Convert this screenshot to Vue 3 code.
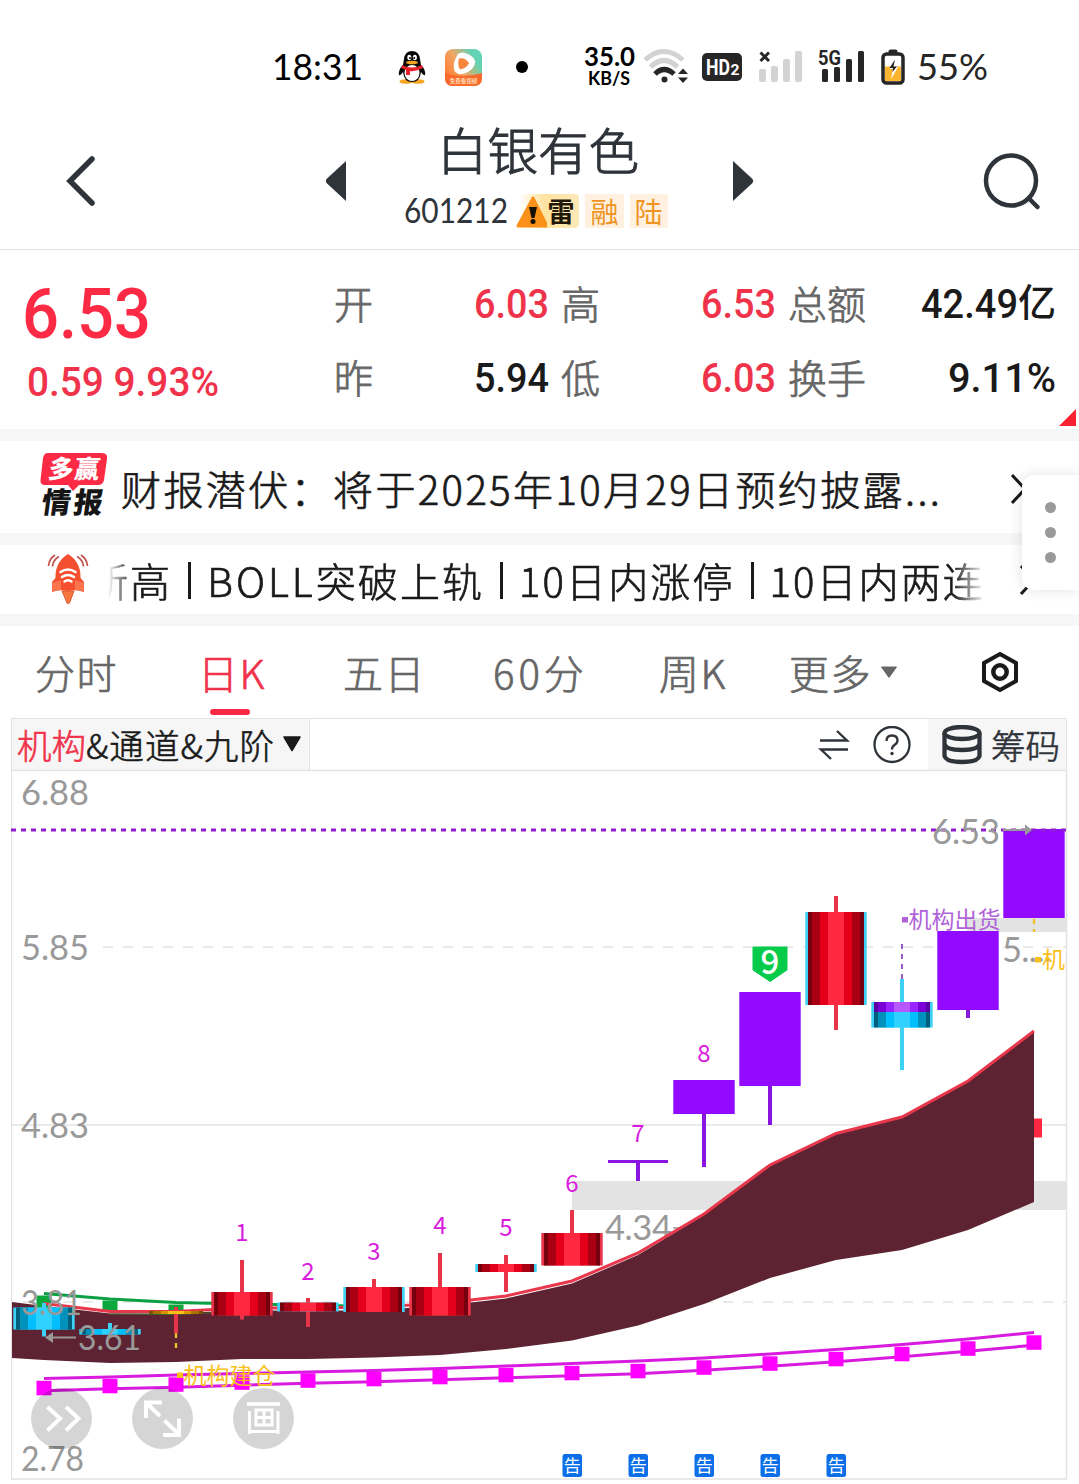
<template>
  <div class="page">
    <header class="status-bar">
      <FitText class="time" text="18:31" :w="91" :size="37" />
      <svg class="qq" width="28" height="34" viewBox="0 0 28 34">
        <ellipse cx="8" cy="31.5" rx="6.5" ry="2.3" fill="#f5a623" />
        <ellipse cx="20" cy="31.5" rx="6.5" ry="2.3" fill="#f5a623" />
        <path d="M5 15 Q0 20 1 25 Q3 26 5 22 Q6 32 14 32 Q22 32 23 22 Q25 26 27 25 Q28 20 23 15 L22 9 Q21 1 14 1 Q7 1 6 9Z" fill="#080808" />
        <ellipse cx="14" cy="23" rx="7.5" ry="8" fill="#fff" />
        <ellipse cx="11.3" cy="7.5" rx="2" ry="2.8" fill="#fff" />
        <ellipse cx="16.9" cy="7.5" rx="2" ry="2.8" fill="#fff" />
        <circle cx="12" cy="8" r="1" fill="#000" />
        <circle cx="16.2" cy="8" r="1" fill="#000" />
        <ellipse cx="14" cy="12.5" rx="6" ry="1.8" fill="#f5a623" />
        <path d="M4 15 Q14 20 24 15 L25 18 Q18 22 12 21 L12 25 H8 V20 Q5 19 3.500 18Z" fill="#e8202c" />
      </svg>
      <svg class="video-app" width="37" height="37" viewBox="0 0 37 37">
        <defs>
          <linearGradient id="appBg" x1="0" y1="0.7" x2="1" y2="0.1">
            <stop offset="0" stop-color="#ff7a2f" />
            <stop offset="0.4" stop-color="#f0a664" />
            <stop offset="0.8" stop-color="#62d3b4" />
          </linearGradient>
        </defs>
        <rect width="37" height="37" rx="8" fill="url(#appBg)" />
        <path d="M0 24 Q18 30 37 24 V29 Q37 37 29 37 H8 Q0 37 0 29Z" fill="#f9692b" />
        <path d="M13 5 Q17 2 23 5 Q31 9 30 14 Q29 20 21 24 Q13 27 9.500 22 Q7 14 13 5Z" fill="#fff" />
        <path d="M14 9.500 Q20 8 24 14 Q22 19 15 20.500 Q12 15 14 9.500Z" fill="#f9843b" />
        <text x="18.500" y="34" text-anchor="middle" font-size="5.500" font-weight="500" fill="#ffe9c8">免费看视频</text>
      </svg>
      <span class="dot"></span>
      <div class="speed">
        <FitText text="35.0" :w="51" :size="26" />
        <FitText text="KB/S" :w="42" :size="18" />
      </div>
      <svg class="wifi" width="44" height="36" viewBox="0 0 44 36" fill="none">
        <path d="M1 11 Q20 -6 39 11" stroke="#d3d3d3" stroke-width="5" />
        <path d="M6.500 18 Q20 5 33.500 18" stroke="#d3d3d3" stroke-width="5" />
        <path d="M11 25 Q20 16 30 25" stroke="#262626" stroke-width="5" />
        <circle cx="20.500" cy="30.500" r="3" fill="#262626" />
        <path d="M34 25 L39 19.500 L44 25Z M34 28.500 L39 34 L44 28.500Z" fill="#262626" />
      </svg>
      <svg class="hd" width="40" height="28" viewBox="0 0 40 28">
        <rect width="40" height="28" rx="5" fill="#262626" />
        <text x="4" y="22" font-size="22" font-weight="700" fill="#fff" textLength="24" lengthAdjust="spacingAndGlyphs">HD</text>
        <text x="28.500" y="22" font-size="15" font-weight="700" fill="#fff" textLength="9" lengthAdjust="spacingAndGlyphs">2</text>
      </svg>
      <svg class="sim" width="44" height="34" viewBox="0 0 44 34">
        <path d="M1.500 2.500 L10 11 M10 2.500 L1.500 11" stroke="#262626" stroke-width="3" />
        <g fill="#d3d3d3">
          <rect x="0" y="19" width="7" height="13" rx="2" />
          <rect x="12" y="16" width="7" height="16" rx="2" />
          <rect x="24" y="9" width="7" height="23" rx="2" />
          <rect x="36" y="1" width="7" height="31" rx="2" />
        </g>
      </svg>
      <svg class="sim5g" width="48" height="34" viewBox="0 0 48 34">
        <g fill="#262626">
          <rect x="4" y="19" width="6" height="13" rx="1.500" />
          <rect x="16" y="17" width="6" height="15" rx="1.500" />
          <rect x="28" y="9" width="6" height="23" rx="1.500" />
          <rect x="40" y="1" width="6" height="31" rx="1.500" />
        </g>
        <text x="0" y="14.500" font-size="21" font-weight="700" fill="#262626" textLength="23" lengthAdjust="spacingAndGlyphs">5G</text>
      </svg>
      <svg class="battery" width="24" height="36" viewBox="0 0 24 36">
        <rect x="7.500" y="0.500" width="9" height="5" rx="2" fill="#262626" />
        <rect x="2" y="5" width="20" height="29" rx="3.500" fill="#fff" stroke="#262626" stroke-width="3.500" />
        <rect x="4" y="17.500" width="16" height="14.500" fill="#fbb52f" />
        <path d="M14 10.500 L8.500 20 H12 L10 30 L17 18 H13Z" fill="#fff" />
        <path d="M14 10.500 L8.500 19 H12 L11.500 23 L16 17.500 H12.500Z" fill="#262626" />
      </svg>
      <FitText class="percent" text="55%" :w="71" :size="37" />
    </header>

    <nav class="title-bar">
      <svg class="back" width="32" height="52" viewBox="0 0 32 52">
        <path d="M27 4 L5 26 L27 48" fill="none" stroke="#2f343a" stroke-width="5.500" stroke-linecap="round" />
      </svg>
      <svg class="prev" width="22" height="42" viewBox="0 0 22 42"><path d="M21 1 V41 L1.500 23 Q0 21 1.500 19Z" fill="#2f343a" /></svg>
      <div class="stock">
        <h1>白银有色</h1>
        <div class="stock-sub">
          <FitText class="code" text="601212" :w="104" :size="34" />
          <span class="tag tag-risk">
            <svg width="31" height="34" viewBox="0 0 31 34">
              <path d="M17 4 L31 32 H2Z" fill="#fa9118" stroke="#fa9118" stroke-width="3" stroke-linejoin="round" />
              <path d="M13 13 H21 L18.500 24 H15.500Z" fill="#151008" />
              <circle cx="17" cy="27.500" r="2.500" fill="#151008" />
            </svg>
            雷
          </span>
          <span class="tag">融</span>
          <span class="tag">陆</span>
        </div>
      </div>
      <svg class="next" width="22" height="42" viewBox="0 0 22 42"><path d="M1 1 V41 L20.500 23 Q22 21 20.500 19Z" fill="#2f343a" /></svg>
      <svg class="search" width="60" height="60" viewBox="0 0 60 60" fill="none" stroke="#2f343a" stroke-width="4.500">
        <circle cx="28" cy="28.500" r="25" />
        <path d="M46 46.500 L54.500 55" stroke-linecap="round" />
      </svg>
    </nav>

    <section class="quote">
      <div class="price">
        <FitText class="last" text="6.53" :w="129" :size="70" />
        <FitText class="change" text="0.59 9.93%" :w="192" :size="40.5" />
      </div>
      <div class="stats">
        <template v-for="s in stats" :key="s.label">
          <span class="label">{{ s.label }}</span>
          <span class="value" :class="{ up: s.up }">
            <FitText :text="s.value" :w="s.w" :size="40.5" /><b v-if="s.unit">{{ s.unit }}</b>
          </span>
        </template>
      </div>
      <span class="corner"></span>
    </section>

    <section class="news">
      <svg class="news-logo" width="68" height="64" viewBox="0 0 68 64">
        <path d="M8 0 H62 Q68 0 67 6 L64 27 Q63 32 58 32 H39 L33 38 L28 32 H5 Q0 32 0.500 27 L3 5 Q4 0 8 0Z" fill="#fd2a45" />
        <g transform="skewX(-8)" font-weight="900">
          <text x="11" y="25" font-size="25" fill="#fff" textLength="51">多赢</text>
          <text x="9" y="60" font-size="29" fill="#151515" textLength="61">情报</text>
        </g>
      </svg>
      <span class="news-text">财报潜伏：将于2025年10月29日预约披露...</span>
      <svg class="chevron" width="18" height="32" viewBox="0 0 18 32"><path d="M2 2 L15 16 L2 30" fill="none" stroke="#1a1a1a" stroke-width="3" /></svg>
    </section>

    <section class="signals">
      <svg class="rocket" width="42" height="52" viewBox="0 0 42 52">
        <g fill="none" stroke="#c4504a" stroke-width="1.700">
          <path d="M8 1 Q2 5 1.500 12 M12 2.500 Q6 6 5.500 12.500 M34 1 Q40 5 40.500 12 M30 2.500 Q36 6 36.500 12.500" />
        </g>
        <path d="M15 37 L20 49 Q21 50 22.500 49 L27 37Z" fill="#f7753f" stroke="#d85a32" />
        <path d="M21 0 Q8 8 8.500 24 L5 28 V38 Q12 35 21 37 Q30 35 37 38 V28 L33.500 24 Q34 8 21 0Z" fill="#f4502f" />
        <path d="M5 29 L14 26 V36 Q9 36 5 38Z M37 29 L28 26 V36 Q33 36 37 38Z" fill="#fa744d" />
        <g fill="none" stroke="#fff" stroke-width="2.500" stroke-linecap="round">
          <path d="M13.500 18 Q21 13 28.500 18 M15 23 Q21 19 27 23 M17.500 27.500 Q21 25 24.500 27.500" />
        </g>
      </svg>
      <div class="marquee">
        <div class="marquee-track">
          <template v-for="(s, i) in signals" :key="i"><i v-if="i" class="bar"></i><span v-if="s.latin" class="latin">{{ s.latin }}</span><span>{{ s.text }}</span></template>
        </div>
      </div>
      <svg class="chevron" width="18" height="32" viewBox="0 0 18 32"><path d="M2 2 L15 16 L2 30" fill="none" stroke="#1a1a1a" stroke-width="3" /></svg>
    </section>

    <aside class="side-handle"><i></i><i></i><i></i></aside>

    <nav class="tabs">
      <span v-for="t in tabs" :key="t.text" class="tab" :class="{ active: t.active, wide: t.wide }" :style="{ marginLeft: t.gap + 'px', width: t.w + 'px' }">{{ t.text }}</span>
      <svg class="caret" width="18" height="13" viewBox="0 0 18 13"><path d="M1.500 1 H16.500 L9 11.500Z" fill="#666" stroke="#666" stroke-linejoin="round" /></svg>
      <svg class="gear" width="38" height="42" viewBox="0 0 38 42" fill="none" stroke="#1a1a1a">
        <path d="M19 3 L35 12 V30 L19 39 L3 30 V12Z" stroke-width="4" />
        <circle cx="19" cy="21" r="6.700" stroke-width="4.500" />
      </svg>
    </nav>

    <div class="toolbar">
      <div class="indicator">
        <em>机构</em><span>&amp;通道&amp;九阶</span>
        <svg width="20" height="18" viewBox="0 0 20 18"><path d="M2 1 H18 L10 14.500Z" fill="#1a1a1a" stroke="#1a1a1a" stroke-width="1.500" stroke-linejoin="round" /></svg>
      </div>
      <svg class="swap" width="34" height="30" viewBox="0 0 34 30" fill="none" stroke="#2f343a" stroke-width="2.400">
        <path d="M3 10.500 H30 L20 1 M31 19.500 H4 L14 29" />
      </svg>
      <svg class="help" width="38" height="38" viewBox="0 0 38 38">
        <circle cx="19" cy="18.500" r="17.500" fill="none" stroke="#2f343a" stroke-width="2.300" />
        <path d="M13.500 15 Q13.500 9.500 19 9.500 Q24.500 9.500 24.500 14.500 Q24.500 17 21.500 19 Q19 20.500 19 23.500" fill="none" stroke="#2f343a" stroke-width="2.300" />
        <circle cx="19" cy="27.500" r="1.700" fill="#2f343a" />
      </svg>
      <div class="chips">
        <svg width="40" height="40" viewBox="0 0 40 40" fill="none" stroke="#2f343a" stroke-width="4.300">
          <ellipse cx="20" cy="8" rx="17.500" ry="6" />
          <path d="M2.500 8 V31 Q4 37 20 37 Q36 37 37.500 31 V8 M2.500 19 Q4 25 20 25 Q36 25 37.500 19" />
        </svg>
        <span>筹码</span>
      </div>
    </div>

    <svg class="chart" width="1057" height="711" viewBox="11 769 1057 711">
      <defs>
        <linearGradient v-for="(c, name) in palettes" :id="'g-' + name" :key="name">
          <template v-for="(b, i) in bands" :key="i">
            <stop :offset="b[0]" :stop-color="c[b[2]]" />
            <stop :offset="b[1]" :stop-color="c[b[2]]" />
          </template>
        </linearGradient>
        <clipPath id="plot"><rect x="12" y="771" width="1054" height="707" /></clipPath>
      </defs>

      <rect x="11.500" y="770.500" width="1055" height="708.500" fill="#fff" stroke="#e3e3e3" stroke-width="1.500" />
      <g stroke="#e3e3e3" stroke-width="1.300">
        <path d="M103 947 H1066 M23 1302 H1066" stroke-dasharray="10 10" />
        <path d="M12 1125 H1066" />
      </g>
      <g fill="#e3e3e3">
        <rect x="967" y="918" width="99" height="14" />
        <rect x="572" y="1181" width="494" height="29" />
      </g>
      <rect x="1027" y="1118.500" width="15" height="19" fill="#ff2840" />

      <!-- gap price, partly hidden by the channel -->
      <g class="axis">
        <text x="605" y="1240" textLength="67">4.34</text>
      </g>
      <path d="M673 1228 H702" stroke="#999" stroke-width="1.500" />

      <!-- channel -->
      <polygon :points="channel" fill="#5d2332" />
      <polyline :points="points(green)" class="line" stroke="#0aa043" />
      <g fill="#0aa83c">
        <rect x="36.500" y="1295.500" width="15" height="13" />
        <rect x="102.500" y="1300.500" width="15" height="10" />
        <rect x="168.500" y="1304.500" width="15" height="7" />
      </g>
      <polyline points="110,1314 176,1314.500 242,1311.500" fill="none" stroke="#3d6b28" />
      <polyline :points="points(red)" class="line" stroke="#e8364b" />

      <polyline :points="points(magentaTop)" class="line" stroke="#d91be0" />
      <polyline :points="points(magentaBase)" class="line" stroke="#d91be0" />
      <rect v-for="(y, i) in squares" :key="'q' + i" :x="cx(i) - 7.5" :y="y - 7.2" width="15" height="14.500" fill="#ff00ff" />

      <!-- candles -->
      <g v-for="(c, i) in candles" :key="'c' + i">
        <rect :x="cx(i) - 2" :y="c.high" width="4" :height="c.low - c.high" :fill="c.wick" />
        <rect v-if="c.edge" :x="cx(i) - 30.7" :y="c.top" width="61.400" :height="c.bottom - c.top" :fill="c.edge" />
        <rect :x="cx(i) - c.half" :y="c.top" :width="c.half * 2" :height="c.bottom - c.top" :fill="c.fill" />
      </g>
      <rect x="874" y="1002" width="56" height="10" fill="url(#g-purple)" />
      <path d="M44 1303 V1309 M110 1323 V1330" stroke="#3fd0f5" stroke-width="4" />

      <path d="M11 830 H1066" stroke="#911bd0" stroke-width="3" stroke-dasharray="5 5" />
      <path d="M902 944 V980" stroke="#9b59c6" stroke-width="2" stroke-dasharray="5 5" />
      <path d="M1034 919 V932 M176 1333 V1349" stroke="#f0c02c" stroke-width="2.300" stroke-dasharray="5 5" />

      <text v-for="n in counts" :key="n.t" class="count" :x="n.x" :y="n.y">{{ n.t }}</text>
      <path d="M753 947 H787 V970 L770 981.500 L753 970Z" fill="#05cb4b" stroke="#05cb4b" stroke-linejoin="round" />
      <text x="770" y="974" class="nine">9</text>

      <g class="axis">
        <text x="21" y="805" textLength="68">6.88</text>
        <text x="21" y="960" textLength="68">5.85</text>
        <text x="21" y="1138" textLength="68">4.83</text>
        <text x="21" y="1315" textLength="61" lengthAdjust="spacingAndGlyphs">3.81</text>
        <text x="21" y="1471" textLength="63" lengthAdjust="spacingAndGlyphs">2.78</text>
        <text x="932" y="844" textLength="68">6.53</text>
        <text x="78" y="1350" textLength="63" lengthAdjust="spacingAndGlyphs">3.61</text>
        <text x="1002" y="962" textLength="50">5....</text>
      </g>
      <g fill="#999">
        <rect x="52" y="1336.500" width="24" height="2" />
        <path d="M45 1337.500 L53 1332 V1343Z M1025 824.500 V835.500 L1032 830Z" />
        <rect x="1003" y="829" width="22" height="2" />
      </g>

      <g class="note" clip-path="url(#plot)">
        <g fill="#b063d8"><rect x="902" y="917" width="6" height="5.500" /><text x="908.500" y="928">机构出货</text></g>
        <g fill="#fac01a">
          <rect x="1035" y="957" width="6" height="5.500" /><text x="1042" y="968">机构</text>
          <rect x="177" y="1372.500" width="6" height="5.500" /><text x="183.500" y="1383.500">机构建仓</text>
        </g>
      </g>

      <g fill="#000" fill-opacity="0.165">
        <circle cx="61.500" cy="1418.500" r="30.500" />
        <circle cx="162.500" cy="1418.500" r="30.500" />
        <circle cx="263.500" cy="1418.500" r="30.500" />
      </g>
      <g fill="none" stroke="#fff" stroke-width="4">
        <path d="M47.500 1407 L60 1418.500 L47.500 1430.500 M66 1407 L78.500 1418.500 L66 1430.500" />
        <path d="M146 1418 V1402.500 H162 M147 1403.500 L160 1416 M164.500 1420.500 L178.500 1434 M163 1435 H179 V1418.500" />
        <path d="M247 1404 H280" stroke-width="3.500" />
        <path d="M249.500 1411 V1434 M278 1411 V1434 M249.500 1431.500 H278" stroke-width="3" />
        <path d="M256 1410 H272 V1425 H256Z M264 1410 V1425 M256 1417.500 H272" stroke-width="3" />
      </g>

      <g v-for="x in notices" :key="'n' + x">
        <rect :x="x - 9.5" y="1454" width="19.500" height="23" rx="2.500" fill="#0d6fe8" />
        <text class="notice" :x="x + 0.2" y="1471.500">告</text>
      </g>
    </svg>
  </div>
</template>

<script setup>
import { h } from 'vue'

// Single line of text squeezed to an exact width
const FitText = (props) =>
  h('svg', { class: 'fit', width: props.w, height: props.size }, [
    h('text', {
      x: 0,
      y: props.size * 0.86,
      'font-size': props.size,
      textLength: props.w,
      lengthAdjust: 'spacingAndGlyphs',
      fill: 'currentColor'
    }, props.text)
  ])
FitText.props = ['text', 'w', 'size']

const stats = [
  { label: '开', value: '6.03', w: 75, up: true },
  { label: '高', value: '6.53', w: 75, up: true },
  { label: '总额', value: '42.49', w: 97, unit: '亿' },
  { label: '昨', value: '5.94', w: 75 },
  { label: '低', value: '6.03', w: 75, up: true },
  { label: '换手', value: '9.11%', w: 108 }
]

const signals = [
  { text: '新高' },
  { latin: 'BOLL', text: '突破上轨' },
  { text: '10日内涨停' },
  { text: '10日内两连' }
]

const tabs = [
  { text: '分时', gap: 35, w: 84 },
  { text: '日K', gap: 79, w: 66, active: true },
  { text: '五日', gap: 79, w: 84 },
  { text: '60分', gap: 66, w: 94, wide: true },
  { text: '周K', gap: 72, w: 70 },
  { text: '更多', gap: 60, w: 84 }
]

// Colour bands of a cylinder-shaped candle: from, to, palette index
const bands = [
  [0, 0.08, 0], [0.08, 0.22, 1], [0.22, 0.36, 2], [0.36, 0.64, 3],
  [0.64, 0.78, 2], [0.78, 0.92, 1], [0.92, 1, 0]
]
const palettes = {
  red: ['#75000e', '#a90013', '#e4001b', '#ff2840'],
  cyan: ['#005f7c', '#0092bb', '#00bfff', '#30d0ff'],
  purple: ['#5b00a5', '#7b00d5', '#9a24ff', '#b957ff'],
  gold: ['#7a5200', '#a87400', '#d89600', '#ffc01a']
}

const RED = '#e83448'
const CYAN = '#3fd0f5'
const VIOLET = '#920aff'
const WICK = '#8a14e0'

const candles = [
  { top: 1307.5, bottom: 1329.5, high: 1303, low: 1336.5, half: 28, wick: CYAN, edge: CYAN, fill: 'url(#g-cyan)' },
  { top: 1329, bottom: 1334.5, high: 1323, low: 1335, half: 28, wick: CYAN, edge: CYAN, fill: 'url(#g-cyan)' },
  { top: 1311, bottom: 1314, high: 1307, low: 1333, half: 27, wick: RED, fill: 'url(#g-gold)' },
  { top: 1292, bottom: 1315.5, high: 1260, low: 1319.5, half: 28, wick: RED, edge: RED, fill: 'url(#g-red)' },
  { top: 1302.5, bottom: 1311.5, high: 1298, low: 1327, half: 28, wick: RED, edge: CYAN, fill: 'url(#g-red)' },
  { top: 1287, bottom: 1312, high: 1279, low: 1300, half: 28, wick: RED, edge: CYAN, fill: 'url(#g-red)' },
  { top: 1287, bottom: 1315.5, high: 1253, low: 1300, half: 28, wick: RED, edge: RED, fill: 'url(#g-red)' },
  { top: 1264, bottom: 1272, high: 1255, low: 1292, half: 28, wick: RED, edge: CYAN, fill: 'url(#g-red)' },
  { top: 1233, bottom: 1265.5, high: 1210, low: 1250, half: 28, wick: RED, edge: RED, fill: 'url(#g-red)' },
  { top: 1160, bottom: 1163, high: 1161, low: 1181, half: 30, wick: WICK, fill: WICK },
  { top: 1080, bottom: 1114, high: 1090, low: 1167, half: 30.7, wick: WICK, fill: VIOLET },
  { top: 992, bottom: 1086, high: 1000, low: 1125, half: 30.7, wick: WICK, fill: VIOLET },
  { top: 912, bottom: 1005, high: 896, low: 1030, half: 28, wick: RED, edge: CYAN, fill: 'url(#g-red)' },
  { top: 1002, bottom: 1027.5, high: 979, low: 1070, half: 28, wick: CYAN, edge: CYAN, fill: 'url(#g-cyan)' },
  { top: 931, bottom: 1010, high: 940, low: 1018, half: 30.7, wick: WICK, fill: VIOLET },
  { top: 829, bottom: 918, high: 829, low: 918, half: 30.7, wick: WICK, fill: VIOLET }
]

const red = [1303.5, 1311.5, 1311.5, 1308, 1308, 1307, 1303.5, 1296, 1281, 1253, 1214, 1165, 1133.5, 1117, 1081, 1031]
const green = [1293.5, 1299, 1302.5, 1304, 1305, 1306.5]
const magentaTop = [1378.5, 1377, 1375, 1373.5, 1372, 1370.5, 1368.5, 1366, 1363.5, 1361, 1358, 1354, 1349.5, 1344.5, 1339, 1332.5]
const squares = [1388, 1386, 1384.5, 1382.5, 1380.5, 1379, 1377, 1375, 1373, 1371, 1367.5, 1363.5, 1359, 1354, 1348.5, 1342.5]
const magentaBase = squares.map((y) => y + 2.7)

const cloudTop = [1306, 1313.5, 1313.5, 1310, 1311, 1310, 1306, 1298.5, 1283.5, 1255, 1215, 1166, 1134.5, 1118, 1082, 1032]
const cloudBottom = [1360, 1363, 1362, 1359, 1359, 1357.5, 1355, 1349, 1340.5, 1325.5, 1304, 1278, 1260, 1250, 1230, 1202]

const cx = (i) => 44 + i * 66
const points = (ys) => ys.map((y, i) => `${cx(i)},${y}`).join(' ')
const channel = [
  '12,1302',
  points(cloudTop),
  cloudBottom.map((y, i) => `${cx(i)},${y}`).reverse().join(' '),
  '12,1358'
].join(' ')

const counts = [
  { t: 1, x: 242, y: 1241 },
  { t: 2, x: 308, y: 1279.5 },
  { t: 3, x: 374, y: 1260 },
  { t: 4, x: 440, y: 1234 },
  { t: 5, x: 506, y: 1236 },
  { t: 6, x: 572, y: 1191.5 },
  { t: 7, x: 638, y: 1142 },
  { t: 8, x: 704, y: 1062 }
]
const notices = [572, 638, 704, 770, 836]
</script>

<style>
body {
  margin: 0;
  background: #fff;
}
</style>

<style scoped>
.page {
  position: relative;
  width: 1079px;
  height: 1484px;
  overflow: hidden;
  background: #fff;
  color: #1a1a1a;
  font-family: "Noto Sans CJK SC", sans-serif;
  font-weight: 300;
}

svg {
  display: block;
  flex: none;
}

.fit {
  overflow: visible;
}

/* status bar */
.status-bar {
  display: flex;
  align-items: center;
  height: 110px;
  box-sizing: border-box;
  padding: 24px 0 0 272px;
  color: #000;
  font-weight: 400;
}

.time,
.percent {
  font-family: Lato, sans-serif;
}

.time { margin-top: -2px; }
.qq { margin-left: 35px; }
.video-app { margin-left: 19px; }

.dot {
  width: 12px;
  height: 12px;
  margin-left: 34px;
  border-radius: 50%;
  background: #000;
}

.speed {
  display: flex;
  flex-direction: column;
  align-items: center;
  width: 52px;
  margin: -3px 0 0 55px;
  font-family: Lato, sans-serif;
  font-weight: 700;
}

.wifi { margin-left: 9px; }
.hd { margin-left: 14px; font-family: Roboto, sans-serif; }
.sim { margin-left: 17px; }
.sim5g { margin-left: 15px; overflow: visible; font-family: Roboto, sans-serif; }
.battery { margin-left: 15px; }
.percent { margin: -2px 0 0 12px; color: #262626; }

/* title */
.title-bar {
  display: flex;
  align-items: center;
  height: 140px;
  box-sizing: border-box;
  border-bottom: 1px solid #e3e3e3;
  color: #2f343a;
}

.back { margin-left: 65px; margin-top: 3px; }
.prev { margin-left: 228px; margin-top: 3px; }

.stock {
  display: flex;
  flex-direction: column;
  align-items: center;
  width: 266px;
  margin: -5px 60px 0 56px;
}

.stock h1 {
  margin: 0 0 0 4px;
  height: 68px;
  line-height: 44px;
  font-size: 50.5px;
  font-weight: 300;
  white-space: nowrap;
  -webkit-text-stroke: 1px currentColor;
}

.stock-sub {
  display: flex;
  align-items: center;
  gap: 6px;
}

.code {
  font-family: Lato, sans-serif;
  font-weight: 400;
}

.tag {
  height: 34px;
  padding: 0 5px;
  background: #fff0e0;
  color: #ee9420;
  font-size: 28px;
  line-height: 34px;
  font-weight: 400;
}

.tag-risk {
  display: flex;
  padding: 0 5px 0 0;
  margin-left: 2px;
  border-radius: 4px;
  background: linear-gradient(90deg, #fff 5%, #ffe3a0 45%, #fde9b8);
  color: #1f1808;
  font-size: 27px;
  font-weight: 700;
}

.next { margin: 3px 0 0 3px; }
.search { margin: 4px 0 0 229px; }

/* quote */
.quote {
  position: relative;
  display: flex;
  height: 179px;
  border-bottom: 12px solid #f6f6f6;
  font-family: Roboto, "Noto Sans CJK SC", sans-serif;
  font-weight: 500;
}

.price {
  width: 333px;
  padding: 28px 0 0 22px;
  box-sizing: border-box;
  color: #f0334b;
}

.last { color: #fd2a45; }
.change { margin: 13px 0 0 5px; }

.stats {
  display: grid;
  grid-template-columns: 40px 176px 51px 176px 90px 190px;
  grid-auto-rows: 74px;
  align-items: center;
  padding-top: 16px;
  box-sizing: border-box;
}

.label {
  margin-top: -3px;
  color: #666;
  font-family: "Noto Sans CJK SC", sans-serif;
  font-size: 39px;
  font-weight: 300;
  line-height: 50px;
  text-align: right;
  -webkit-text-stroke: 0.8px currentColor;
}

.value {
  display: flex;
  align-items: center;
  justify-content: flex-end;
  color: #1a1a1a;
}

.value b {
  font-size: 38px;
  font-weight: 500;
  line-height: 50px;
}

.value.up { color: #ee334a; }

.corner {
  position: absolute;
  right: 3px;
  bottom: 3px;
  width: 17px;
  height: 17px;
  background: #f82332;
  clip-path: polygon(100% 0, 100% 100%, 0 100%);
}

/* info rows */
.news,
.signals {
  display: flex;
  align-items: center;
  border-bottom: 12px solid #f6f6f6;
  font-size: 40px;
  -webkit-text-stroke: 0.7px currentColor;
}

.news { height: 92px; }
.signals { height: 69px; }

.news-logo {
  margin: -4px 0 0 40px;
  overflow: visible;
  -webkit-text-stroke: 0;
}

.news-text {
  width: 889px;
  margin: 1px 0 0 13px;
  letter-spacing: 2.4px;
  line-height: 60px;
  white-space: nowrap;
}

.news .chevron { margin-top: 4px; }

.rocket { margin-left: 47px; }

.marquee {
  display: flex;
  width: 877px;
  margin: 0 0 0 19px;
  overflow: hidden;
  -webkit-mask-image: linear-gradient(90deg, transparent, #000 24px, #000 845px, transparent);
  mask-image: linear-gradient(90deg, transparent, #000 24px, #000 845px, transparent);
}

.marquee-track {
  display: flex;
  align-items: center;
  margin-left: -20px;
  letter-spacing: 2.1px;
  line-height: 60px;
  white-space: nowrap;
}

.latin {
  letter-spacing: 3px;
}

.bar {
  width: 3px;
  height: 37px;
  margin: 2px 16px 0 16px;
  background: #1a1a1a;
}

.signals .chevron { margin-left: 34px; }

.side-handle {
  position: absolute;
  top: 475px;
  right: 0;
  display: flex;
  flex-direction: column;
  align-items: center;
  justify-content: center;
  gap: 14px;
  width: 57px;
  height: 115px;
  border-radius: 12px 0 0 12px;
  background: #fff;
  box-shadow: 0 0 14px rgba(0, 0, 0, 0.12);
}

.side-handle i {
  width: 11px;
  height: 11px;
  border-radius: 50%;
  background: #999;
}

/* period tabs */
.tabs {
  display: flex;
  align-items: center;
  height: 92px;
  color: #666;
  font-size: 40px;
  -webkit-text-stroke: 0.7px currentColor;
}

.tab {
  position: relative;
  letter-spacing: 1.5px;
  line-height: 91px;
  white-space: nowrap;
}

.tab.wide { letter-spacing: 4px; }
.tab.active { color: #f0334b; }

.tab.active::after {
  content: "";
  position: absolute;
  bottom: 3px;
  left: 12px;
  width: 40px;
  height: 6px;
  border-radius: 3px;
  background: #fd2a45;
}

.caret { margin-left: 7px; }
.gear { margin-left: 83px; }

/* indicator toolbar */
.toolbar {
  display: flex;
  align-items: center;
  width: 1056px;
  height: 52px;
  margin-left: 11px;
  box-sizing: border-box;
  border: 1px solid #e3e3e3;
  border-bottom: 0;
  font-size: 34.5px;
  -webkit-text-stroke: 0.6px currentColor;
}

.indicator {
  display: flex;
  align-items: center;
  width: 297px;
  height: 51px;
  border-right: 1px solid #e3e3e3;
  background: #f6f6f6;
  line-height: 49px;
  white-space: nowrap;
}

.indicator em {
  margin-left: 5px;
  color: #f0334b;
  font-style: normal;
}

.indicator span {
  letter-spacing: 1.1px;
}

.indicator svg { margin-left: 7px; }
.swap { margin-left: 507px; }
.help { margin-left: 22px; }

.chips {
  display: flex;
  align-items: center;
  width: 138px;
  height: 51px;
  margin-left: 17px;
  box-sizing: border-box;
  padding-left: 14px;
  background: #f6f6f6;
  color: #2f343a;
  line-height: 49px;
}

.chips span { margin-left: 9px; }

/* chart */
.chart {
  margin: -1px 0 0 11px;
}

.line {
  fill: none;
  stroke-width: 3;
}

.axis {
  fill: #999;
  font-family: Lato, sans-serif;
  font-size: 34.5px;
  font-weight: 400;
}

.count {
  fill: #d81bdc;
  font-size: 24px;
  font-weight: 400;
  text-anchor: middle;
}

.nine {
  fill: #fff;
  font-size: 33px;
  font-weight: 500;
  text-anchor: middle;
}

.note {
  font-size: 23px;
  font-weight: 400;
}

.notice {
  fill: #fff;
  font-size: 17px;
  font-weight: 400;
  text-anchor: middle;
}
</style>
